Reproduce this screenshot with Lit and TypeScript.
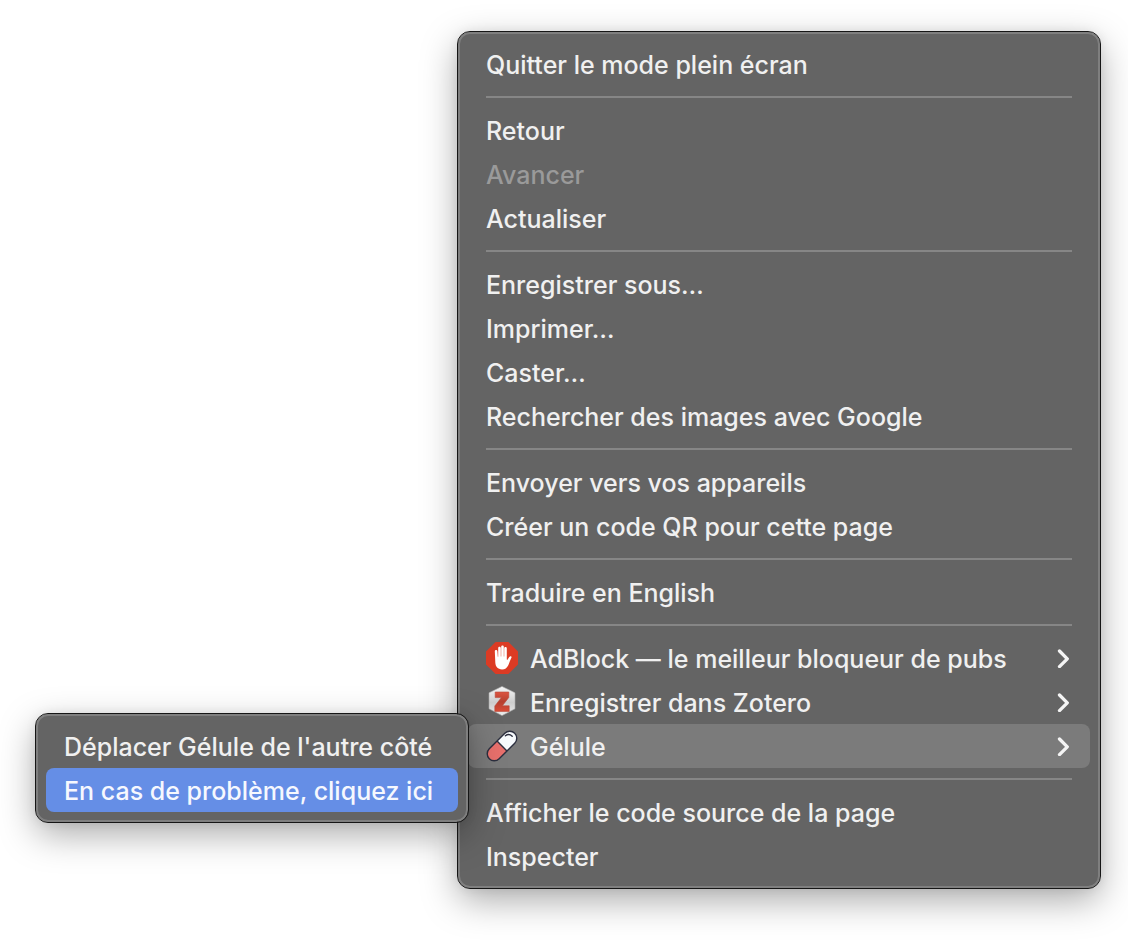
import { LitElement, html, svg, css, nothing, TemplateResult } from "lit";
import { customElement, property } from "lit/decorators.js";

interface Entry {
  label: string;
  disabled?: boolean;
  active?: boolean;
  icon?: TemplateResult;
  children?: Entry[];
}

const adblockIcon = html`<svg class="icon" viewBox="0 0 32 32" aria-hidden="true">
  ${svg`<path d="M9.600 0h12.800L32 9.600v12.800L22.400 32H9.600L0 22.400V9.600z" fill="#dc3b24"/>
  <path d="M8.800 9.200c0-1.600 2.500-1.600 2.600 0l.4 5.600h.4V6c0-1.600 2.600-1.600 2.600 0v8.500h.4V4.800c0-1.700 2.600-1.700 2.600 0v9.700h.4V6.300c0-1.600 2.600-1.600 2.600 0v11.200l.5.400c1-1.600 1.800-3.100 2.900-3.600.9-.4 1.700.3 1.300 1.300-1.300 2.500-2 5.200-3.200 7.600-1.400 2.800-3.300 4.200-6.200 4.200-4.400 0-6.500-2.500-6.800-6.800z" fill="#fff"/>`}
</svg>`;

const zoteroIcon = html`<svg class="icon" viewBox="0 0 32 32" aria-hidden="true">
  ${svg`<defs>
    <linearGradient id="hex" x1="0" y1="0" x2="0" y2="1">
      <stop offset="0" stop-color="#f6f6f6"/><stop offset=".55" stop-color="#cdcdcd"/><stop offset="1" stop-color="#ededed"/>
    </linearGradient>
    <linearGradient id="zed" x1="0" y1="0" x2="0" y2="1">
      <stop offset="0" stop-color="#dc5440"/><stop offset=".5" stop-color="#b5402f"/><stop offset="1" stop-color="#d94c37"/>
    </linearGradient>
  </defs>
  <path d="M16 .4l13 6.400v16L16 29.600 3 22.800v-16z" fill="url(#hex)" stroke="#a9a9a9" stroke-width=".6"/>
  <path d="M9.200 6h13.600v5.400l-6.400 8.400h6.800v5.600H8.800V20l6.600-8.400H9.200z" fill="url(#zed)" stroke="#b94a3a" stroke-width=".6" stroke-linejoin="round"/>`}
</svg>`;

const pillIcon = html`<svg class="icon" viewBox="0 0 32 32" aria-hidden="true">
  ${svg`<g transform="rotate(45 16 16)">
    <path d="M9 16V5a7 7 0 0 1 14 0v11z" fill="#f7fafd"/>
    <path d="M9 16v11a7 7 0 0 0 14 0V16z" fill="#e8706c"/>
    <rect x="9" y="-2" width="14" height="36" rx="7" fill="none" stroke="#2c2f3f" stroke-width="1.400"/>
    <path d="M9 16h14" stroke="#2c2f3f" stroke-width="1.400"/>
  </g>
  <path d="M19.400 5.800c2-1.600 4.800-1.500 6.800.4" fill="none" stroke="#2c2f3f" stroke-width="1.400" stroke-linecap="round"/>`}
</svg>`;

const groups: Entry[][] = [
  [{ label: "Quitter le mode plein écran" }],
  [{ label: "Retour" }, { label: "Avancer", disabled: true }, { label: "Actualiser" }],
  [
    { label: "Enregistrer sous…" },
    { label: "Imprimer…" },
    { label: "Caster…" },
    { label: "Rechercher des images avec Google" },
  ],
  [{ label: "Envoyer vers vos appareils" }, { label: "Créer un code QR pour cette page" }],
  [{ label: "Traduire en English" }],
  [
    { label: "AdBlock — le meilleur bloqueur de pubs", icon: adblockIcon, children: [] },
    { label: "Enregistrer dans Zotero", icon: zoteroIcon, children: [] },
    {
      label: "Gélule",
      icon: pillIcon,
      children: [
        { label: "Déplacer Gélule de l'autre côté" },
        { label: "En cas de problème, cliquez ici", active: true },
      ],
    },
  ],
  [{ label: "Afficher le code source de la page" }, { label: "Inspecter" }],
];

@customElement("context-menu")
class ContextMenu extends LitElement {
  @property({ attribute: false }) groups: Entry[][] = [];

  static styles = css`
    :host {
      display: block;
      box-sizing: border-box;
      padding: 8px;
      border: 2px solid #7f7f7f;
      border-radius: 12px;
      background: #646464;
      outline: 1px solid #161616;
      margin: 1px;
      box-shadow: 0 12px 36px rgba(0, 0, 0, 0.34), 0 0 12px rgba(0, 0, 0, 0.08);
      color: #f0f0f0;
      font: 500 25px/42px Inter, "Liberation Sans", sans-serif;
      font-variant-ligatures: none;
    }
    .list {
      margin: 0;
      padding: 0;
      list-style: none;
    }
    .row {
      position: relative;
    }
    .item {
      display: flex;
      align-items: center;
      gap: 12px;
      box-sizing: border-box;
      width: 100%;
      height: 44px;
      padding: 0 18px;
      border: 0;
      border-radius: 8px;
      background: none;
      color: inherit;
      font: inherit;
      font-variant-ligatures: inherit;
      text-align: left;
      white-space: nowrap;
    }
    .item:disabled {
      color: #9a9a9a;
    }
    .open {
      background: #7b7b7b;
    }
    .active {
      background: #658ee6;
      color: #f6f8fe;
    }
    .label {
      flex: 1;
      padding-top: 2px;
    }
    .icon {
      flex: none;
      width: 32px;
      height: 32px;
      overflow: visible;
    }
    .chevron {
      flex: none;
      width: 16px;
      height: 20px;
    }
    .separator {
      height: 2px;
      margin: 10px 18px;
      border: 0;
      background: #868686;
    }
    .submenu {
      position: absolute;
      top: -11px;
      right: calc(100% - 1px);
      z-index: 1;
      min-width: 432px;
    }
  `;

  private renderEntry(entry: Entry) {
    const open = !!entry.children?.length;
    const state = entry.active ? "active" : open ? "open" : "";
    return html`<li class="row" role="none">
      <button
        class="item ${state}"
        type="button"
        role="menuitem"
        ?disabled=${entry.disabled}
        aria-haspopup=${entry.children ? "menu" : nothing}
      >
        ${entry.icon ?? nothing}
        <span class="label">${entry.label}</span>
        ${entry.children
          ? html`<svg class="chevron" viewBox="0 0 16 20" aria-hidden="true">
              <path d="M3.500 3L11.300 10.800L3.500 18.600" fill="none" stroke="#f4f4f4" stroke-width="3.300" stroke-linecap="round" stroke-linejoin="round" />
            </svg>`
          : nothing}
      </button>
      ${open ? html`<context-menu class="submenu" .groups=${[entry.children!]}></context-menu>` : nothing}
    </li>`;
  }

  render() {
    return html`<ul class="list" role="menu">
      ${this.groups.map(
        (group, i) => html`${i ? html`<li role="none"><hr class="separator" /></li>` : nothing}
        ${group.map((entry) => this.renderEntry(entry))}`
      )}
    </ul>`;
  }
}

@customElement("app-root")
class AppRoot extends LitElement {
  static styles = css`
    :host {
      display: flex;
      justify-content: flex-end;
      box-sizing: border-box;
      min-height: 100vh;
      align-items: flex-start;
      padding: 31px 27px 31px 35px;
      background: #fff;
    }
    .main {
      flex: 0 1 642px;
    }
  `;

  render() {
    return html`<context-menu class="main" .groups=${groups}></context-menu>`;
  }
}
